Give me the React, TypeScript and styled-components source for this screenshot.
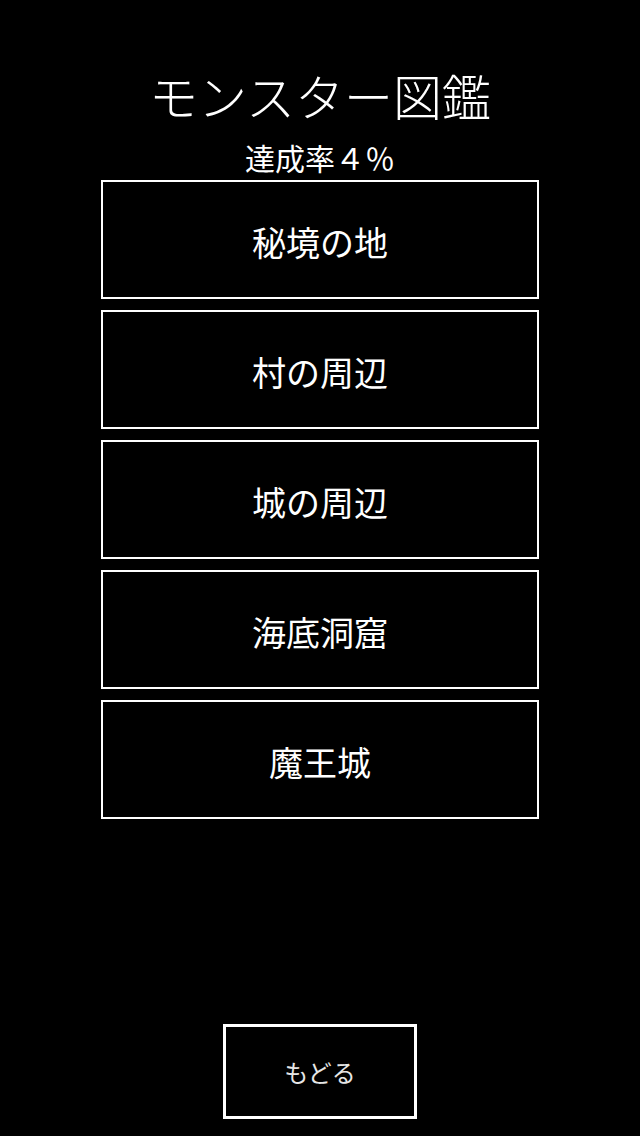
import styled, { createGlobalStyle } from "styled-components";

const GlobalStyle = createGlobalStyle`
  html, body {
    margin: 0;
    padding: 0;
    background: #000;
  }
  body {
    font-family: "Noto Sans CJK JP", "Noto Sans", sans-serif;
    color: #fff;
  }
`;

const Screen = styled.div`
  width: 640px;
  min-height: 1136px;
  box-sizing: border-box;
  display: flex;
  flex-direction: column;
  align-items: center;
  padding: 65px 0 17px;
`;

const Title = styled.h1`
  margin: 0;
  font-size: 49px;
  font-weight: 300;
  line-height: 60px;
  height: 60px;
`;

const Progress = styled.div`
  margin-top: 17px;
  font-size: 30px;
  line-height: 30px;
  height: 30px;
  margin-bottom: 8px;
`;

const AreaList = styled.ul`
  list-style: none;
  margin: 0;
  padding: 0;
  display: flex;
  flex-direction: column;
  gap: 11px;
`;

const AreaButton = styled.li`
  width: 438px;
  height: 119px;
  box-sizing: border-box;
  border: 2px solid #fff;
  display: flex;
  align-items: center;
  justify-content: center;
  font-size: 34px;
  padding-top: 4px;
`;

const BackButton = styled.button<{ $width: number }>`
  margin-top: auto;
  width: ${(p) => p.$width}px;
  height: 95px;
  box-sizing: border-box;
  border: 3px solid #fff;
  background: #000;
  color: #e6e6e6;
  font-family: inherit;
  font-size: 24px;
  cursor: pointer;
`;

const areas = ["秘境の地", "村の周辺", "城の周辺", "海底洞窟", "魔王城"];

export default function App() {
  return (
    <>
      <GlobalStyle />
      <Screen>
        <Title>モンスター図鑑</Title>
        <Progress>{"達成率\uFF14\uFF05"}</Progress>
        <AreaList>
          {areas.map((name) => (
            <AreaButton key={name}>{name}</AreaButton>
          ))}
        </AreaList>
        <BackButton $width={194}>もどる</BackButton>
      </Screen>
    </>
  );
}
